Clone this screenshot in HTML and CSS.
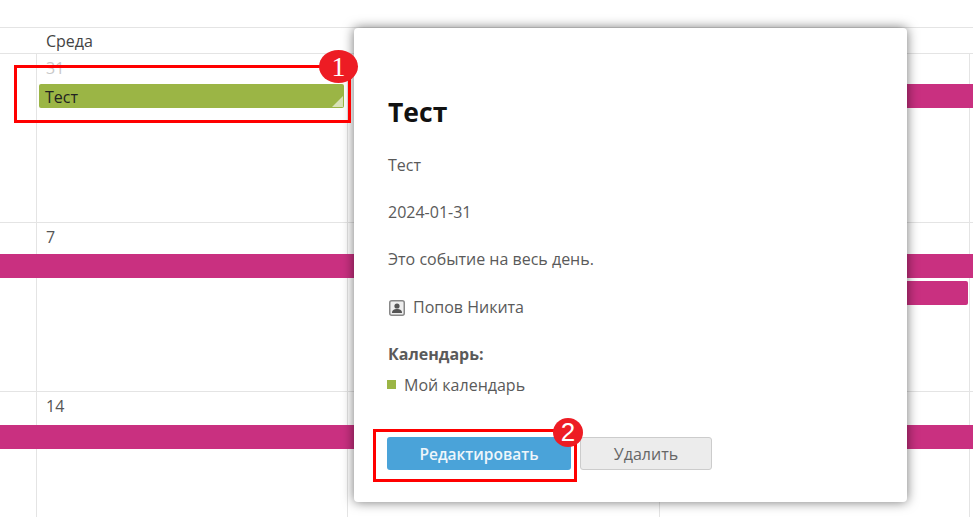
FILE: index.html
```html
<!DOCTYPE html>
<html>
<head>
  <meta charset="utf-8">
  <link rel="stylesheet" href="styles.css">
</head>
<body>
  <div class="calendar">
    <div class="head">
      <div class="head-cell"></div>
      <div class="head-cell">Среда</div>
      <div class="head-cell"></div>
      <div class="head-cell"></div>
    </div>

    <div class="week week-first">
      <div class="cell cell-1"></div>
      <div class="cell cell-2"><span class="day muted">31</span></div>
      <div class="cell cell-3"></div>
      <div class="cell cell-4"></div>
      <div class="event green">Тест<span class="corner"></span></div>
      <div class="bar bar-right"></div>
    </div>

    <div class="week">
      <div class="cell cell-1"></div>
      <div class="cell cell-2"><span class="day">7</span></div>
      <div class="cell cell-3"></div>
      <div class="cell cell-4"></div>
      <div class="bar bar-full"></div>
      <div class="bar bar-second"></div>
    </div>

    <div class="week week-last">
      <div class="cell cell-1"></div>
      <div class="cell cell-2"><span class="day">14</span></div>
      <div class="cell cell-3"></div>
      <div class="cell cell-4"></div>
      <div class="bar bar-full"></div>
    </div>
  </div>

  <div class="popup">
    <h2 class="title">Тест</h2>
    <p class="line">Тест</p>
    <p class="line">2024-01-31</p>
    <p class="line">Это событие на весь день.</p>
    <p class="line person">
      <svg class="person-icon" width="16" height="16" viewBox="0 0 16 16">
        <rect x="0.75" y="0.75" width="14.5" height="14.5" rx="2" fill="#eee" stroke="#888" stroke-width="1.5"/>
        <circle cx="8" cy="6" r="2.6" fill="#555"/>
        <path d="M3 13c0-3 2-4 5-4s5 1 5 4z" fill="#555"/>
      </svg>
      Попов Никита
    </p>
    <p class="label">Календарь:</p>
    <p class="cal-name"><span class="swatch"></span>Мой календарь</p>
    <div class="actions">
      <button class="btn btn-edit">Редактировать</button>
      <button class="btn btn-delete">Удалить</button>
    </div>
  </div>

  <!-- annotations on top of the screenshot -->
  <div class="mark mark-1"></div>
  <div class="badge badge-1">1</div>
  <div class="mark mark-2"></div>
  <div class="badge badge-2">2</div>
</body>
</html>
```

FILE: styles.css
```css
html, body {
  margin: 0;
  height: 100%;
  overflow: hidden;
  background-color: white;
}
body {
  position: relative;
  font-family: "Open Sans", sans-serif;
  font-size: 16px;
  color: #5a5a5a;
}

.calendar {
  padding-top: 27px;
}
.head {
  display: grid;
  grid-template-columns: 37px 311px 312px 1fr;
  height: 25px;
  border-top: 1px solid #e4e4e4;
  border-bottom: 1px solid #e4e4e4;
}
.head-cell {
  padding-left: 9px;
  line-height: 27px;
  color: #444;
}
.week {
  display: grid;
  grid-template-columns: 37px 311px 312px 1fr;
  grid-template-rows: 31px 24px 3px 24px 1fr;
  height: 168px;
  border-bottom: 1px solid #e4e4e4;
}
.week-first {
  grid-template-rows: 30px 24px 1fr;
}
.week-last {
  grid-template-rows: 33px 24px 1fr;
  height: 125px;
  border-bottom: 0;
}
.cell {
  grid-row: 1 / -1;
  border-right: 1px solid #e4e4e4;
}
.cell-1 { grid-column: 1; }
.cell-2 { grid-column: 2; }
.cell-3 { grid-column: 3; }
.cell-4 { grid-column: 4; margin-right: 3px; }
.day {
  display: block;
  padding: 4px 0 0 9px;
  line-height: 20px;
  color: #555;
}
.day.muted {
  color: #c8c8c8;
}

.event {
  grid-column: 2;
  grid-row: 2;
  position: relative;
  margin: 0 4px 0 2px;
  padding: 1px 0 0 6px;
  line-height: 24px;
  color: #222;
  border-radius: 2px;
}
.green {
  background-color: #9bb545;
}
.corner {
  position: absolute;
  right: 1px;
  bottom: 1px;
  border-left: 11px solid transparent;
  border-bottom: 11px solid #d9e2b8;
}
.bar {
  grid-row: 2;
  height: 24px;
  background-color: #c93080;
}
.bar-full {
  grid-column: 1 / -1;
}
.bar-right {
  grid-column: 4 / -1;
}
.bar-second {
  grid-column: 4 / -1;
  grid-row: 4;
  margin-right: 5px;
  border-radius: 2px;
}

.popup {
  position: absolute;
  left: 354px;
  top: 28px;
  box-sizing: border-box;
  width: 553px;
  height: 474px;
  padding: 68px 34px 0;
  background-color: white;
  border-radius: 4px;
  box-shadow: 0 0 12px rgba(0, 0, 0, 0.55);
}
.title {
  margin: 0 0 28px;
  font-size: 26.5px;
  line-height: 32px;
  font-weight: 700;
  color: #111;
}
.line {
  margin: 0 0 28px;
  line-height: 19px;
}
.person {
  display: flex;
  align-items: center;
  gap: 8px;
  padding: 1px 0 0 1px;
}
.label {
  margin: 0 0 12px;
  line-height: 19px;
  font-weight: 700;
}
.cal-name {
  display: flex;
  align-items: center;
  margin: 0 0 42px -1px;
  line-height: 19px;
}
.swatch {
  width: 9px;
  height: 9px;
  margin-right: 8px;
  margin-top: -3px;
  background-color: #9bb545;
}
.actions {
  display: flex;
  gap: 9px;
  margin-left: -1px;
}
.btn {
  height: 33px;
  padding: 0;
  font-family: "Open Sans", sans-serif;
  font-size: 16px;
  border-radius: 3px;
  box-sizing: border-box;
}
.btn-edit {
  width: 184px;
  font-size: 15.5px;
  font-weight: 600;
  color: #eef6fb;
  background-color: #4aa3d9;
  border: 0;
}
.btn-delete {
  width: 132px;
  color: #666;
  background-color: #ececec;
  border: 1px solid #ccc;
}

.mark {
  position: absolute;
  box-sizing: border-box;
  border: 3px solid #f00;
}
.mark-1 {
  left: 14px;
  top: 65px;
  width: 337px;
  height: 58px;
}
.mark-2 {
  left: 373px;
  top: 429px;
  width: 204px;
  height: 53px;
}
.badge {
  position: absolute;
  display: flex;
  align-items: center;
  justify-content: center;
  background-color: #ed1c24;
  color: white;
  border-radius: 50%;
}
.badge-1 {
  left: 319px;
  top: 50px;
  width: 39px;
  height: 33px;
  font-family: "Liberation Serif", serif;
  font-size: 28px;
}
.badge-2 {
  left: 553px;
  top: 418px;
  width: 30px;
  height: 29px;
  font-family: "Liberation Sans", sans-serif;
  font-size: 26px;
}
```
